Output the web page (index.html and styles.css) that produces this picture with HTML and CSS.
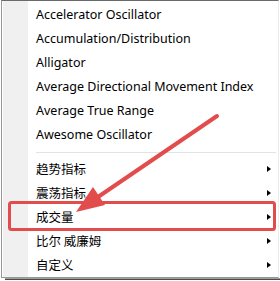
FILE: index.html
```html
<!DOCTYPE html>
<html>
<head>
<meta charset="utf-8">
<link rel="stylesheet" href="styles.css">
</head>
<body>
<div class="menu">
  <div class="items">
    <div class="item">Accelerator Oscillator</div>
    <div class="item">Accumulation/Distribution</div>
    <div class="item">Alligator</div>
    <div class="item">Average Directional Movement Index</div>
    <div class="item">Average True Range</div>
    <div class="item">Awesome Oscillator</div>
    <div class="sep"></div>
    <div class="item sub cjk">趋势指标<span class="tri"></span></div>
    <div class="item sub cjk">震荡指标<span class="tri"></span></div>
    <div class="item sub cjk">成交量<span class="tri"></span></div>
    <div class="item sub cjk">比尔 威廉姆<span class="tri"></span></div>
    <div class="item sub cjk">自定义<span class="tri"></span></div>
  </div>
</div>
<div class="shadow"></div>
<svg class="annot" width="280" height="281" viewBox="0 0 280 281">
  <rect x="9.5" y="202.5" width="265" height="27" rx="2" fill="none" stroke="#e34c4c" stroke-width="3"/>
  <line x1="217" y1="116" x2="95" y2="199" stroke="#e34c4c" stroke-width="4" stroke-linecap="round"/>
  <polygon points="76,212 105,205 93,187" fill="#e34c4c"/>
</svg>
</body>
</html>
```
FILE: styles.css
```css
html, body {
  margin: 0;
  padding: 0;
  background: #ffffff;
  width: 280px;
  height: 281px;
  overflow: hidden;
  position: relative;
}
.menu {
  margin-left: 1px;
  width: 278px;
  border: 1px solid #979797;
  border-top-color: #6a6a6a;
  border-right-color: #ececec;
  background: #ffffff;
  padding: 2px 0 0 0;
  box-sizing: border-box;
  height: 278px;
  display: flex;
  background-image: linear-gradient(to right, #f0f0f0 0, #f0f0f0 25px, #ffffff 25px);
  background-repeat: no-repeat;
  background-position: 1px 0;
}
.items {
  flex: 1;
  display: flex;
  flex-direction: column;
}
.item {
  height: 24px;
  line-height: 24px;
  padding-left: 34px;
  font-family: "Noto Sans", "Noto Sans CJK SC", sans-serif;
  font-size: 12.5px;
  color: #000000;
  display: flex;
  align-items: center;
  position: relative;
}
.cjk {
  font-family: "Noto Sans CJK SC", sans-serif;
  font-size: 12.5px;
}
.sep {
  height: 10px;
  margin-left: 34px;
  margin-right: 2px;
  display: flex;
  align-items: center;
}
.sep::after {
  content: "";
  display: block;
  flex: 1;
  height: 1px;
  background: #e3e3e3;
}
.tri {
  margin-left: auto;
  margin-right: 7px;
  width: 0;
  height: 0;
  border-left: 4px solid #000000;
  border-top: 3.5px solid transparent;
  border-bottom: 3.5px solid transparent;
}
.shadow {
  margin-left: 5px;
  width: 275px;
  height: 2px;
  background: linear-gradient(#c8c8c8, #222222);
}
.annot {
  position: absolute;
  left: 0;
  top: 0;
}
```
